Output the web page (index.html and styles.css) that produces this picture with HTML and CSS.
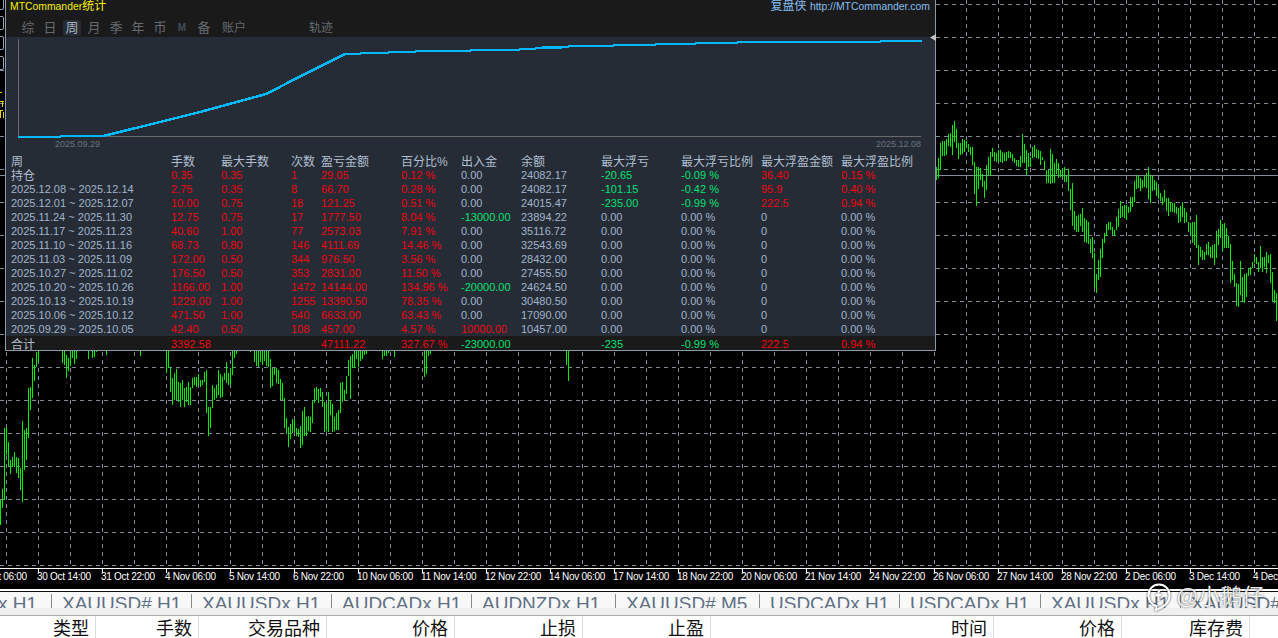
FILE: index.html
```html
<!DOCTYPE html>
<html lang="zh">
<head>
<meta charset="utf-8">
<title>MTCommander统计</title>
<link rel="stylesheet" href="styles.css">
</head>
<body>
<div class="app">
  <section class="chart">
    <svg class="chart-canvas" width="1278" height="589" viewBox="0 0 1278 589">
      <path class="grid" d="M0 4.5H1278M0 37.5H1278M0 70.5H1278M0 103.5H1278M0 136.5H1278M0 169.5H1278M0 202.5H1278M0 235.5H1278M0 268.5H1278M0 301.5H1278M0 334.5H1278M0 367.5H1278M0 400.5H1278M0 433.5H1278M0 466.5H1278M0 499.5H1278M0 532.5H1278M0 565.5H1278"/>
      <path class="grid" d="M6.5 0V568M38.5 0V568M70.5 0V568M102.5 0V568M134.5 0V568M166.5 0V568M198.5 0V568M230.5 0V568M262.5 0V568M294.5 0V568M326.5 0V568M358.5 0V568M390.5 0V568M422.5 0V568M454.5 0V568M486.5 0V568M518.5 0V568M550.5 0V568M582.5 0V568M614.5 0V568M646.5 0V568M678.5 0V568M710.5 0V568M742.5 0V568M774.5 0V568M806.5 0V568M838.5 0V568M870.5 0V568M902.5 0V568M934.5 0V568M966.5 0V568M998.5 0V568M1030.5 0V568M1062.5 0V568M1094.5 0V568M1126.5 0V568M1158.5 0V568M1190.5 0V568M1222.5 0V568M1254.5 0V568"/>
      <path class="price-line" d="M0 175.5H1278"/>
      <g transform="scale(1 .33333)">
        <path class="bars" d="M936 500h1V540h-1zM938 475h1V535h-1zM940 430h1V510h-1zM942 424h1V467h-1zM944 422h1V467h-1zM946 418h1V465h-1zM948 402h1V438h-1zM950 400h1V440h-1zM952 375h1V465h-1zM954 363h1V425h-1zM956 388h1V445h-1zM958 430h1V476h-1zM960 430h1V465h-1zM962 418h1V462h-1zM964 420h1V455h-1zM966 422h1V442h-1zM968 432h1V455h-1zM970 442h1V465h-1zM972 442h1V495h-1zM974 487h1V582h-1zM976 502h1V617h-1zM978 502h1V567h-1zM980 505h1V540h-1zM982 522h1V562h-1zM984 543h1V593h-1zM986 495h1V570h-1zM988 472h1V525h-1zM990 457h1V527h-1zM992 445h1V470h-1zM994 455h1V482h-1zM996 460h1V485h-1zM998 450h1V485h-1zM1000 450h1V487h-1zM1002 455h1V488h-1zM1004 458h1V482h-1zM1006 455h1V482h-1zM1008 453h1V475h-1zM1010 455h1V475h-1zM1012 462h1V482h-1zM1014 475h1V490h-1zM1016 480h1V497h-1zM1018 480h1V500h-1zM1020 468h1V500h-1zM1022 402h1V490h-1zM1024 432h1V490h-1zM1026 450h1V525h-1zM1028 460h1V500h-1zM1030 470h1V500h-1zM1032 440h1V475h-1zM1034 435h1V470h-1zM1036 447h1V475h-1zM1038 450h1V478h-1zM1040 452h1V495h-1zM1042 470h1V480h-1zM1044 482h1V510h-1zM1046 510h1V550h-1zM1048 510h1V550h-1zM1050 447h1V552h-1zM1052 462h1V550h-1zM1054 490h1V550h-1zM1056 478h1V522h-1zM1058 490h1V535h-1zM1060 510h1V530h-1zM1062 505h1V535h-1zM1064 500h1V545h-1zM1066 527h1V545h-1zM1068 508h1V573h-1zM1070 567h1V630h-1zM1072 548h1V678h-1zM1074 632h1V690h-1zM1076 648h1V695h-1zM1078 645h1V695h-1zM1080 642h1V678h-1zM1082 625h1V695h-1zM1084 655h1V725h-1zM1086 660h1V730h-1zM1088 665h1V732h-1zM1090 718h1V760h-1zM1092 710h1V775h-1zM1094 760h1V865h-1zM1096 822h1V880h-1zM1098 780h1V840h-1zM1100 747h1V830h-1zM1102 717h1V775h-1zM1104 700h1V730h-1zM1106 672h1V708h-1zM1108 665h1V690h-1zM1110 665h1V690h-1zM1112 680h1V705h-1zM1114 690h1V708h-1zM1116 650h1V690h-1zM1118 628h1V680h-1zM1120 603h1V655h-1zM1122 618h1V650h-1zM1124 615h1V655h-1zM1126 615h1V660h-1zM1128 620h1V640h-1zM1130 590h1V635h-1zM1132 590h1V620h-1zM1134 543h1V605h-1zM1136 525h1V568h-1zM1138 527h1V565h-1zM1140 533h1V572h-1zM1142 540h1V565h-1zM1144 528h1V562h-1zM1146 520h1V563h-1zM1148 500h1V597h-1zM1150 525h1V608h-1zM1152 527h1V572h-1zM1154 540h1V570h-1zM1156 545h1V587h-1zM1158 565h1V597h-1zM1160 580h1V603h-1zM1162 590h1V615h-1zM1164 570h1V607h-1zM1166 595h1V632h-1zM1168 595h1V647h-1zM1170 605h1V637h-1zM1172 608h1V637h-1zM1174 608h1V640h-1zM1176 620h1V642h-1zM1178 625h1V670h-1zM1180 618h1V665h-1zM1182 607h1V650h-1zM1184 625h1V668h-1zM1186 635h1V665h-1zM1188 665h1V695h-1zM1190 670h1V708h-1zM1192 665h1V730h-1zM1194 665h1V735h-1zM1196 645h1V745h-1zM1198 735h1V795h-1zM1200 740h1V770h-1zM1202 750h1V780h-1zM1204 755h1V780h-1zM1206 733h1V765h-1zM1208 727h1V765h-1zM1210 742h1V775h-1zM1212 735h1V775h-1zM1214 733h1V795h-1zM1216 692h1V775h-1zM1218 687h1V735h-1zM1220 660h1V715h-1zM1222 672h1V752h-1zM1224 668h1V745h-1zM1226 685h1V745h-1zM1228 708h1V745h-1zM1230 733h1V850h-1zM1232 783h1V840h-1zM1234 822h1V860h-1zM1236 850h1V917h-1zM1238 852h1V920h-1zM1240 783h1V885h-1zM1242 832h1V905h-1zM1244 822h1V908h-1zM1246 818h1V890h-1zM1248 805h1V827h-1zM1250 800h1V825h-1zM1252 785h1V805h-1zM1254 762h1V790h-1zM1256 770h1V792h-1zM1258 787h1V815h-1zM1260 738h1V805h-1zM1262 770h1V815h-1zM1264 772h1V800h-1zM1266 755h1V820h-1zM1268 765h1V790h-1zM1270 762h1V848h-1zM1272 817h1V907h-1zM1274 870h1V908h-1zM1276 880h1V962h-1z"/>
      </g>
      <g transform="translate(0 345) scale(1 .33333)">
        <path class="bars" d="M0 465h1V540h-1zM2 432h1V490h-1zM4 250h1V465h-1zM6 245h1V330h-1zM8 290h1V365h-1zM10 345h1V387h-1zM12 335h1V365h-1zM14 320h1V365h-1zM16 335h1V385h-1zM18 340h1V400h-1zM20 370h1V435h-1zM22 228h1V472h-1zM24 255h1V375h-1zM26 250h1V345h-1zM28 130h1V278h-1zM30 125h1V195h-1zM32 40h1V160h-1zM34 60h1V107h-1zM36 20h1V65h-1zM38 18h1V48h-1zM62 18h1V55h-1zM64 18h1V60h-1zM66 30h1V98h-1zM68 40h1V78h-1zM70 18h1V62h-1zM72 18h1V40h-1zM74 18h1V57h-1zM76 18h1V42h-1zM88 18h1V42h-1zM92 18h1V38h-1zM94 18h1V35h-1zM96 18h1V22h-1zM106 18h1V30h-1zM140 18h1V33h-1zM166 18h1V85h-1zM168 18h1V68h-1zM170 65h1V140h-1zM172 100h1V180h-1zM174 85h1V165h-1zM176 72h1V165h-1zM178 110h1V170h-1zM180 115h1V185h-1zM182 105h1V165h-1zM184 130h1V185h-1zM186 125h1V170h-1zM188 110h1V180h-1zM190 125h1V180h-1zM192 100h1V130h-1zM194 97h1V120h-1zM196 97h1V125h-1zM198 88h1V120h-1zM200 105h1V125h-1zM202 105h1V120h-1zM204 80h1V110h-1zM206 75h1V205h-1zM208 185h1V272h-1zM210 185h1V250h-1zM212 120h1V190h-1zM214 130h1V165h-1zM216 120h1V160h-1zM218 75h1V150h-1zM220 88h1V160h-1zM222 95h1V155h-1zM224 85h1V105h-1zM226 50h1V115h-1zM228 85h1V120h-1zM230 70h1V120h-1zM232 18h1V90h-1zM234 18h1V38h-1zM236 18h1V28h-1zM250 18h1V20h-1zM254 18h1V50h-1zM256 18h1V62h-1zM258 18h1V65h-1zM260 18h1V52h-1zM262 18h1V60h-1zM264 18h1V48h-1zM266 18h1V62h-1zM268 18h1V65h-1zM270 42h1V130h-1zM272 68h1V122h-1zM274 68h1V90h-1zM276 70h1V115h-1zM278 75h1V118h-1zM280 102h1V165h-1zM282 115h1V165h-1zM284 160h1V250h-1zM286 220h1V268h-1zM288 245h1V305h-1zM290 238h1V282h-1zM292 222h1V265h-1zM294 225h1V262h-1zM296 248h1V272h-1zM298 252h1V275h-1zM300 243h1V308h-1zM302 198h1V300h-1zM304 187h1V272h-1zM306 217h1V272h-1zM308 213h1V258h-1zM310 216h1V262h-1zM312 168h1V233h-1zM314 130h1V175h-1zM316 127h1V165h-1zM318 132h1V175h-1zM320 128h1V155h-1zM322 140h1V185h-1zM324 172h1V260h-1zM326 178h1V258h-1zM328 140h1V262h-1zM330 168h1V210h-1zM332 177h1V260h-1zM334 215h1V258h-1zM336 205h1V255h-1zM338 195h1V255h-1zM340 115h1V205h-1zM342 110h1V172h-1zM344 135h1V165h-1zM346 92h1V147h-1zM348 45h1V92h-1zM350 33h1V162h-1zM352 28h1V68h-1zM354 18h1V68h-1zM356 18h1V42h-1zM358 18h1V65h-1zM360 18h1V48h-1zM362 18h1V42h-1zM364 18h1V30h-1zM366 18h1V28h-1zM382 18h1V42h-1zM384 18h1V32h-1zM386 18h1V32h-1zM388 18h1V25h-1zM394 18h1V36h-1zM424 18h1V95h-1zM426 18h1V88h-1zM428 18h1V32h-1zM430 18h1V26h-1zM566 18h1V60h-1zM568 18h1V107h-1z"/>
      </g>
      <path class="edge-mark" d="M0 92.5H2M0 101.5H4M2.5 102V107M0 110.5H3M0.5 111V118M3.5 112V118"/>
      <path class="axis" d="M0 568.5H1278M38.5 568V573M102.5 568V573M166.5 568V573M230.5 568V573M294.5 568V573M358.5 568V573M422.5 568V573M486.5 568V573M550.5 568V573M614.5 568V573M678.5 568V573M742.5 568V573M806.5 568V573M870.5 568V573M934.5 568V573M998.5 568V573M1062.5 568V573M1126.5 568V573M1190.5 568V573M1254.5 568V573"/>
    </svg>

    <div class="edge-boxes">
      <span class="edge-box"></span>
      <span class="edge-box"></span>
      <span class="edge-box"></span>
      <span class="edge-box"></span>
    </div>

    <div class="plot"></div>
    <div class="timescale">
      <span>29 Oct 06:00</span><span>30 Oct 14:00</span><span>31 Oct 22:00</span><span>4 Nov 06:00</span><span>5 Nov 14:00</span><span>6 Nov 22:00</span><span>10 Nov 06:00</span><span>11 Nov 14:00</span><span>12 Nov 22:00</span><span>14 Nov 06:00</span><span>17 Nov 14:00</span><span>18 Nov 22:00</span><span>20 Nov 06:00</span><span>21 Nov 14:00</span><span>24 Nov 22:00</span><span>26 Nov 06:00</span><span>27 Nov 14:00</span><span>28 Nov 22:00</span><span>2 Dec 06:00</span><span>3 Dec 14:00</span><span>4 Dec 22:00</span>
    </div>

    <div class="panel">
      <header class="panel-head">
        <div class="title-row">
          <span class="title">MTCommander<span class="title-cjk">统计</span></span>
          <span class="brand">复盘侠 <span class="brand-link">http://MTCommander.com</span></span>
        </div>
        <nav class="tabs">
          <span class="tab">综</span>
          <span class="tab">日</span>
          <span class="tab"><span class="tab-active">周</span></span>
          <span class="tab">月</span>
          <span class="tab">季</span>
          <span class="tab">年</span>
          <span class="tab">币</span>
          <span class="tab tab-m">M</span>
          <span class="tab">备</span>
          <span class="tab-wide">账户</span>
          <span class="tab-wide tab-track">轨迹</span>
        </nav>
      </header>
      <div class="curve">
        <svg width="929" height="117" viewBox="6 37 929 117">
          <path class="curve-axis" d="M18.5 39V136.5H921"/>
          <polyline class="curve-line" points="18,137 60,137 61,136 103,136 140,127 200,112 266,94 305,74 345,54 360,54 361,53 388,53 389,52 415,52 416,51 470,51 471,50 519,50 520,49 535,49 536,48 568,47 569,46 613,46 614,45 655,45 656,44 695,44 696,43 737,43 738,42 880,42 881,41 922,41"/>
          <text class="curve-date" x="55" y="147">2025.09.29</text>
          <text class="curve-date" x="876" y="147">2025.12.08</text>
        </svg>
      </div>
      <div class="report">
        <div class="row row-head"><span>周</span><span>手数</span><span>最大手数</span><span>次数</span><span>盈亏金额</span><span>百分比%</span><span>出入金</span><span>余额</span><span>最大浮亏</span><span>最大浮亏比例</span><span>最大浮盈金额</span><span>最大浮盈比例</span></div>
        <div class="row"><span class="name">持仓</span><span class="up">0.35</span><span class="up">0.35</span><span class="up">1</span><span class="up">29.05</span><span class="up">0.12 %</span><span>0.00</span><span>24082.17</span><span class="down">-20.65</span><span class="down">-0.09 %</span><span class="up">36.40</span><span class="up">0.15 %</span></div>
        <div class="row"><span>2025.12.08 ~ 2025.12.14</span><span class="up">2.75</span><span class="up">0.35</span><span class="up">8</span><span class="up">66.70</span><span class="up">0.28 %</span><span>0.00</span><span>24082.17</span><span class="down">-101.15</span><span class="down">-0.42 %</span><span class="up">95.9</span><span class="up">0.40 %</span></div>
        <div class="row"><span>2025.12.01 ~ 2025.12.07</span><span class="up">10.00</span><span class="up">0.75</span><span class="up">18</span><span class="up">121.25</span><span class="up">0.51 %</span><span>0.00</span><span>24015.47</span><span class="down">-235.00</span><span class="down">-0.99 %</span><span class="up">222.5</span><span class="up">0.94 %</span></div>
        <div class="row"><span>2025.11.24 ~ 2025.11.30</span><span class="up">12.75</span><span class="up">0.75</span><span class="up">17</span><span class="up">1777.50</span><span class="up">8.04 %</span><span class="down">-13000.00</span><span>23894.22</span><span>0.00</span><span>0.00 %</span><span>0</span><span>0.00 %</span></div>
        <div class="row"><span>2025.11.17 ~ 2025.11.23</span><span class="up">40.60</span><span class="up">1.00</span><span class="up">77</span><span class="up">2573.03</span><span class="up">7.91 %</span><span>0.00</span><span>35116.72</span><span>0.00</span><span>0.00 %</span><span>0</span><span>0.00 %</span></div>
        <div class="row"><span>2025.11.10 ~ 2025.11.16</span><span class="up">68.73</span><span class="up">0.80</span><span class="up">146</span><span class="up">4111.69</span><span class="up">14.46 %</span><span>0.00</span><span>32543.69</span><span>0.00</span><span>0.00 %</span><span>0</span><span>0.00 %</span></div>
        <div class="row"><span>2025.11.03 ~ 2025.11.09</span><span class="up">172.00</span><span class="up">0.50</span><span class="up">344</span><span class="up">976.50</span><span class="up">3.56 %</span><span>0.00</span><span>28432.00</span><span>0.00</span><span>0.00 %</span><span>0</span><span>0.00 %</span></div>
        <div class="row"><span>2025.10.27 ~ 2025.11.02</span><span class="up">176.50</span><span class="up">0.50</span><span class="up">353</span><span class="up">2831.00</span><span class="up">11.50 %</span><span>0.00</span><span>27455.50</span><span>0.00</span><span>0.00 %</span><span>0</span><span>0.00 %</span></div>
        <div class="row"><span>2025.10.20 ~ 2025.10.26</span><span class="up">1166.00</span><span class="up">1.00</span><span class="up">1472</span><span class="up">14144.00</span><span class="up">134.96 %</span><span class="down">-20000.00</span><span>24624.50</span><span>0.00</span><span>0.00 %</span><span>0</span><span>0.00 %</span></div>
        <div class="row"><span>2025.10.13 ~ 2025.10.19</span><span class="up">1229.00</span><span class="up">1.00</span><span class="up">1255</span><span class="up">13390.50</span><span class="up">78.35 %</span><span>0.00</span><span>30480.50</span><span>0.00</span><span>0.00 %</span><span>0</span><span>0.00 %</span></div>
        <div class="row"><span>2025.10.06 ~ 2025.10.12</span><span class="up">471.50</span><span class="up">1.00</span><span class="up">540</span><span class="up">6633.00</span><span class="up">63.43 %</span><span>0.00</span><span>17090.00</span><span>0.00</span><span>0.00 %</span><span>0</span><span>0.00 %</span></div>
        <div class="row"><span>2025.09.29 ~ 2025.10.05</span><span class="up">42.40</span><span class="up">0.50</span><span class="up">108</span><span class="up">457.00</span><span class="up">4.57 %</span><span class="up">10000.00</span><span>10457.00</span><span>0.00</span><span>0.00 %</span><span>0</span><span>0.00 %</span></div>
        <div class="row row-total"><span class="name">合计</span><span class="up">3392.58</span><span></span><span></span><span class="up">47111.22</span><span class="up">327.67 %</span><span class="down">-23000.00</span><span></span><span class="down">-235</span><span class="down">-0.99 %</span><span class="up">222.5</span><span class="up">0.94 %</span></div>
      </div>
      <span class="marker"></span>
    </div>
  </section>

  <div class="tabbar">
    <div class="doc-tabs">
      <span class="doc-tab doc-first">XAUUSDx H1</span>
      <span class="doc-tab">XAUUSD# H1</span>
      <span class="doc-tab">XAUUSDx H1</span>
      <span class="doc-tab">AUDCADx H1</span>
      <span class="doc-tab doc-wide">AUDNZDx H1</span>
      <span class="doc-tab doc-wide">XAUUSD# M5</span>
      <span class="doc-tab">USDCADx H1</span>
      <span class="doc-tab doc-mid">USDCADx H1</span>
      <span class="doc-tab">XAUUSDx H1</span>
      <span class="doc-tab doc-end">XAUUSD# H1</span>
    </div>
  </div>

  <div class="orders">
    <span>类型</span><span>手数</span><span>交易品种</span><span>价格</span><span>止损</span><span>止盈</span><span>时间</span><span>价格</span><span>库存费</span><span></span>
  </div>

  <div class="watermark">
    <svg class="watermark-logo" width="24" height="28" viewBox="0 0 24 28">
      <path d="M12 1.5C5.8 1.5 1.5 6.2 1.5 12.5C1.5 18 5 22 9.5 23L9 27C13 25.5 22.5 21 22.5 12.5C22.5 6.2 18.2 1.5 12 1.5Z"/>
      <path d="M15 7C12.5 6.5 11.5 8 11.5 10V18M8.5 12H14"/>
    </svg>
    <span>@小鹅仔</span>
  </div>
</div>
</body>
</html>
```

FILE: styles.css
```css
* { box-sizing: border-box; }

html, body {
  margin: 0;
  padding: 0;
  background: #f0f0f0;
}

.app {
  position: relative;
  width: 1278px;
  height: 638px;
  overflow: hidden;
  font-family: "Liberation Sans", "Noto Sans CJK SC", sans-serif;
}

/* Chart */
.chart {
  position: relative;
  height: 589px;
  background: #000;
  overflow: hidden;
}

.chart-canvas {
  position: absolute;
  left: 0;
  top: 0;
  display: block;
}

.grid {
  fill: none;
  stroke: #7f8c9c;
  stroke-width: 1;
  stroke-dasharray: 4 4;
  shape-rendering: crispEdges;
}

.price-line {
  stroke: #7f8c9c;
  stroke-width: 1;
  shape-rendering: crispEdges;
}

.bars {
  fill: #00f000;
  shape-rendering: crispEdges;
}

.axis {
  fill: none;
  stroke: #fff;
  stroke-width: 1;
  shape-rendering: crispEdges;
}

.edge-mark {
  fill: none;
  stroke: #e8d400;
  stroke-width: 1;
  shape-rendering: crispEdges;
}

.edge-boxes {
  position: absolute;
  left: -2px;
  top: -4px;
  display: flex;
  flex-direction: column;
  gap: 6px;
}

.edge-box {
  display: block;
  width: 6px;
  height: 14px;
  border: 1px solid #8fa0b6;
  border-radius: 2px;
  background: #000;
}

.plot { height: 568px; }

.timescale {
  position: relative;
  display: flex;
  height: 21px;
  margin-left: -27px;
  padding-top: 3px;
  color: #fff;
  font-size: 10px;
  line-height: 12px;
  letter-spacing: -0.28px;
}

.timescale span {
  flex: 0 0 64px;
  white-space: nowrap;
}

/* Statistics panel */
.panel {
  position: absolute;
  left: 5px;
  top: 0;
  width: 931px;
  height: 351px;
  background: #252c36;
  border-left: 1px solid #8a98aa;
  border-right: 1px solid #8a98aa;
  border-bottom: 1px solid #8a98aa;
  display: flex;
  flex-direction: column;
}

.panel-head {
  height: 37px;
  background: #1a1a1a;
}

.title-row {
  display: flex;
  justify-content: space-between;
  height: 14px;
  padding: 0 5px 0 4px;
  line-height: 13px;
  white-space: nowrap;
}

.title {
  color: #f5f000;
  font-size: 10.4px;
}

.title-cjk { font-size: 12px; }

.brand {
  color: #86bdf0;
  font-size: 12px;
}

.brand-link { font-size: 10.4px; }

.tabs {
  display: flex;
  align-items: center;
  height: 23px;
  padding: 6px 0 1px 11px;
  color: #666b70;
  font-size: 13px;
  line-height: 16px;
}

.tab {
  flex: 0 0 22px;
  text-align: center;
}

.tab-active {
  display: inline-block;
  width: 18px;
  height: 16px;
  border-radius: 2px;
  background: #252c36;
  color: #a7b3c2;
}

.tab-m {
  color: #414c5e;
  font-size: 10px;
  font-weight: bold;
}

.tab-wide {
  flex: 0 0 25px;
  margin-left: 7px;
  font-size: 12px;
  white-space: nowrap;
}

.tab-track { margin-left: 62px; }

.curve {
  height: 117px;
  flex: none;
}

.curve svg { display: block; }

.curve-axis {
  fill: none;
  stroke: #6b6b6b;
  stroke-width: 1;
  shape-rendering: crispEdges;
}

.curve-line {
  fill: none;
  stroke: #00b9ff;
  stroke-width: 2.6;
  shape-rendering: crispEdges;
}

.curve-date {
  fill: #69727e;
  font-size: 9px;
}

.report {
  color: #a3b4cb;
  font-size: 11px;
  line-height: 14px;
}

.row {
  display: grid;
  grid-template-columns: 160px 50px 70px 30px 80px 60px 60px 80px 80px 80px 80px 84px;
  height: 14px;
  padding-left: 5px;
  white-space: nowrap;
}

.row-head,
.name {
  color: #b2bfd0;
  font-size: 12px;
  line-height: 16px;
}

.row-total { background: #1a1a1a; }

.row-total span { padding-top: 1px; }

.up { color: #f00010; }
.down { color: #00e070; }

.marker {
  position: absolute;
  left: 924px;
  top: 34px;
  width: 6px;
  height: 7px;
  background: #c4c4c4;
  clip-path: polygon(100% 0, 0 50%, 100% 100%);
}

/* Document tabs */
.tabbar {
  height: 27px;
  background: #f0f0f0;
  border-top: 2px solid #fff;
  border-bottom: 1px solid #a9a9a9;
  overflow: hidden;
}

.doc-tabs {
  display: flex;
  height: 17px;
  border-top: 1px solid #111;
  overflow: hidden;
  background: #f8f8f8;
  color: #5f6f85;
  font-size: 19px;
  line-height: 20px;
  white-space: nowrap;
}

.doc-tab {
  flex: 0 0 140px;
  min-width: 0;
  height: 14px;
  margin-top: 2px;
  padding-left: 10px;
  border-right: 1px solid #8a8a8a;
  overflow: hidden;
}

.doc-first {
  flex-basis: 52px;
  padding: 0 14px 0 0;
  direction: rtl;
}

.doc-wide { flex-basis: 144px; }
.doc-mid { flex-basis: 141px; }
.doc-end { border-right: 0; }

/* Orders header */
.orders {
  display: grid;
  grid-template-columns: 96px 103px 128px 128px 128px 128px 283px 128px 128px 29px;
  height: 22px;
  background: #fff;
  color: #111;
  font-size: 18px;
  line-height: 27px;
  overflow: hidden;
}

.orders span {
  padding-right: 6px;
  text-align: right;
  border-right: 1px solid #dcdcdc;
  white-space: nowrap;
}

.orders span:last-child { border-right: 0; }

/* Watermark */
.watermark {
  position: absolute;
  left: 1147px;
  top: 583px;
  display: flex;
  align-items: center;
  gap: 5px;
  color: rgba(255, 255, 255, .92);
  font-size: 22px;
  line-height: 28px;
  text-shadow: 0 0 2px rgba(0, 0, 0, .75);
}

.watermark-logo {
  filter: drop-shadow(0 0 1px rgba(0, 0, 0, .75));
}

.watermark-logo path {
  fill: none;
  stroke: #fff;
  stroke-width: 2;
}
```
